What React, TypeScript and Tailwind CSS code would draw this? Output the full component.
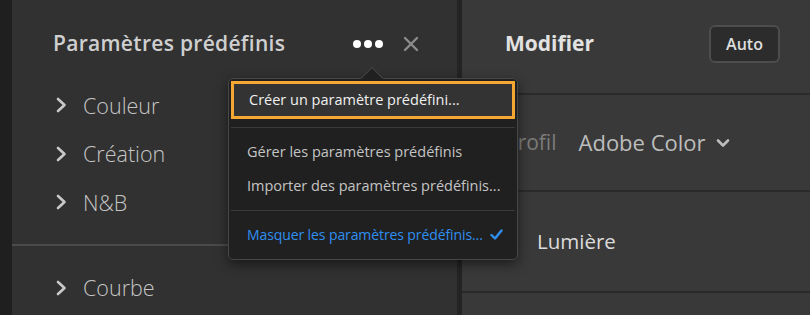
import React from "react";

const font = { fontFamily: '"Open Sans", "Noto Sans", sans-serif' };

const Chevron = () => (
	<svg width="12" height="16" viewBox="0 0 12 16" fill="none">
		<path d="M3 2 L9.5 8 L3 14" stroke="#c9c9c9" strokeWidth="2.6" strokeLinecap="round" strokeLinejoin="round" />
	</svg>
);

const PresetRow = ({ label }: { label: string }) => (
	<div className="flex items-center h-[48.5px] pl-[43px] gap-[16px]">
		<Chevron />
		<span className="text-[21.5px] text-[#c6c6c6] font-light leading-none">{label}</span>
	</div>
);

export default function App() {
	return (
		<div className="relative flex w-[810px] h-[315px] overflow-hidden bg-[#393939]" style={font}>
			<div className="w-[12px] h-full bg-[#1f1f1f]" />

			{/* presets panel */}
			<div className="flex flex-col w-[445px] h-full bg-[#313131]">
				<div className="flex items-center h-[88px] pl-[41px] pr-[38px]">
					<h2 className="text-[21px] font-semibold text-[#cfcfcf] tracking-[0.3px] whitespace-nowrap">Paramètres prédéfinis</h2>
					<div className="flex items-center gap-[3px] ml-auto mr-[20px]">
						<span className="w-[8px] h-[8px] rounded-full bg-white" />
						<span className="w-[8px] h-[8px] rounded-full bg-white" />
						<span className="w-[8px] h-[8px] rounded-full bg-white" />
					</div>
					<svg width="16" height="16" viewBox="0 0 16 16">
						<path d="M2 2 L14 14 M14 2 L2 14" stroke="#8c8c8c" strokeWidth="2.4" strokeLinecap="round" />
					</svg>
				</div>
				<div className="flex flex-col -mt-[7px]">
					<PresetRow label="Couleur" />
					<PresetRow label="Création" />
					<PresetRow label="N&B" />
				</div>
				<div className="h-[2px] mt-[17px] bg-[#4a4a4a]" />
				<div className="mt-[18px]">
					<PresetRow label="Courbe" />
				</div>
			</div>

			<div className="w-[5px] h-full bg-[#242424]" />

			{/* edit panel */}
			<div className="flex flex-col flex-1 h-full">
				<div className="flex items-center justify-between h-[93px] pl-[43px] pr-[30px] pb-[5px]">
					<h2 className="text-[21px] font-bold text-[#e2e2e2]">Modifier</h2>
					<button className="w-[71px] h-[38px] rounded-[6px] border-2 border-[#4d4d4d] bg-[#2c2c2c] text-[16px] font-semibold text-[#dedede]">
						Auto
					</button>
				</div>
				<div className="h-[2px] bg-[#2a2a2a]" />
				<div className="flex items-center h-[95px] pl-[43px]">
					<span className="text-[21px] text-[#7b7b7b]">Profil</span>
					<span className="ml-[22px] text-[22px] text-[#bdbdbd]">Adobe Color</span>
					<svg className="ml-[10px]" width="14" height="10" viewBox="0 0 14 10" fill="none">
						<path d="M2 2.5 L7 7.5 L12 2.5" stroke="#bdbdbd" strokeWidth="2.6" strokeLinecap="round" strokeLinejoin="round" />
					</svg>
				</div>
				<div className="h-[2px] bg-[#2a2a2a]" />
				<div className="flex items-center h-[99px] pl-[75px]">
					<span className="text-[20.5px] text-[#dcdcdc]">Lumière</span>
				</div>
				<div className="h-[2px] bg-[#2a2a2a]" />
			</div>

			{/* overflow menu */}
			<div className="absolute left-[228px] top-[78px] w-[290px] h-[182px] rounded-[5px] border border-[#474747] bg-[#202020] shadow-[0_4px_12px_rgba(0,0,0,0.5)]">
				<div className="absolute left-[135px] -top-[9px] w-[16px] h-[16px] rotate-45 border-l border-t border-[#474747] bg-[#202020]" />
				<div className="relative flex items-center mx-[2px] mt-[2px] h-[38px] border-[3px] border-[#f5a633] bg-[#333333] pl-[15px]">
					<span className="text-[14.5px] text-[#f0f0f0] whitespace-nowrap">Créer un paramètre prédéfini...</span>
				</div>
				<div className="h-[1px] mt-[8px] mx-[2px] bg-[#3a3a3a]" />
				<div className="flex flex-col pl-[18px] pt-[7px]">
					<span className="h-[34px] flex items-center text-[14.5px] text-[#c4c4c4] whitespace-nowrap">Gérer les paramètres prédéfinis</span>
					<span className="h-[34px] flex items-center text-[14.5px] text-[#c4c4c4] whitespace-nowrap">Importer des paramètres prédéfinis...</span>
				</div>
				<div className="h-[1px] mt-[7px] mx-[2px] bg-[#3a3a3a]" />
				<div className="flex items-center justify-between h-[46px] pl-[18px] pr-[14px]">
					<span className="text-[14px] text-[#2f8ff0] whitespace-nowrap tracking-[-0.1px]">Masquer les paramètres prédéfinis...</span>
					<svg width="13" height="11" viewBox="0 0 13 11" fill="none">
						<path d="M1.5 6 L5 9.5 L11.5 1.5" stroke="#2f8ff0" strokeWidth="2.4" strokeLinecap="round" strokeLinejoin="round" />
					</svg>
				</div>
			</div>
		</div>
	);
}
